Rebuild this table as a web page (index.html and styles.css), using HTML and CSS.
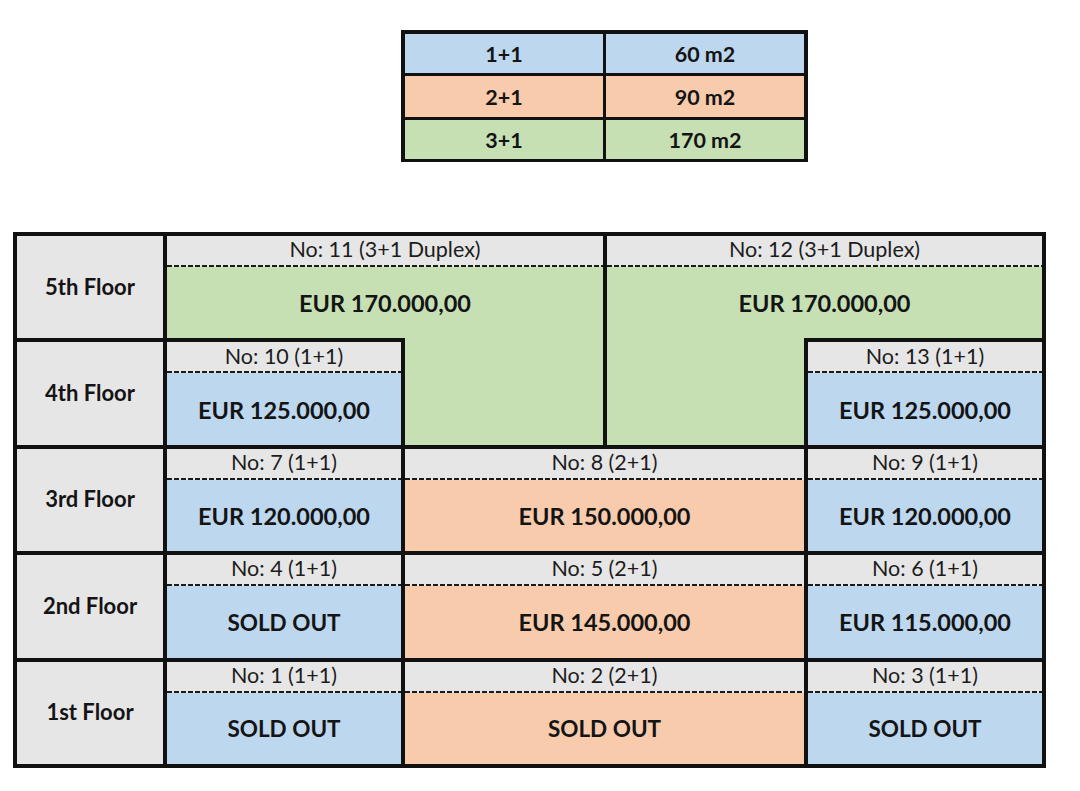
FILE: index.html
```html
<!DOCTYPE html>
<html lang="en">
<head>
<meta charset="utf-8">
<title>Floor plan prices</title>
<link rel="stylesheet" href="styles.css">
</head>
<body>
<div class="legend">
  <div class="lg blue">1+1</div><div class="lg blue">60 m2</div>
  <div class="lg orange">2+1</div><div class="lg orange">90 m2</div>
  <div class="lg green">3+1</div><div class="lg green">170 m2</div>
</div>

<div class="plan">
  <div class="floor">5th Floor</div>
  <div class="unit span2 green"><div class="no">No: 11 (3+1 Duplex)</div><div class="dash"></div><div class="price">EUR 170.000,00</div></div>
  <div class="unit span2 green"><div class="no">No: 12 (3+1 Duplex)</div><div class="dash"></div><div class="price">EUR 170.000,00</div></div>

  <div class="floor">4th Floor</div>
  <div class="unit blue"><div class="no">No: 10 (1+1)</div><div class="dash"></div><div class="price">EUR 125.000,00</div></div>
  <div class="fill green"></div>
  <div class="fill green"></div>
  <div class="unit blue"><div class="no">No: 13 (1+1)</div><div class="dash"></div><div class="price">EUR 125.000,00</div></div>

  <div class="floor">3rd Floor</div>
  <div class="unit blue"><div class="no">No: 7 (1+1)</div><div class="dash"></div><div class="price">EUR 120.000,00</div></div>
  <div class="unit span2 orange"><div class="no">No: 8 (2+1)</div><div class="dash"></div><div class="price">EUR 150.000,00</div></div>
  <div class="unit blue"><div class="no">No: 9 (1+1)</div><div class="dash"></div><div class="price">EUR 120.000,00</div></div>

  <div class="floor">2nd Floor</div>
  <div class="unit blue"><div class="no">No: 4 (1+1)</div><div class="dash"></div><div class="price sold">SOLD OUT</div></div>
  <div class="unit span2 orange"><div class="no">No: 5 (2+1)</div><div class="dash"></div><div class="price">EUR 145.000,00</div></div>
  <div class="unit blue"><div class="no">No: 6 (1+1)</div><div class="dash"></div><div class="price">EUR 115.000,00</div></div>

  <div class="floor">1st Floor</div>
  <div class="unit blue"><div class="no">No: 1 (1+1)</div><div class="dash"></div><div class="price sold">SOLD OUT</div></div>
  <div class="unit span2 orange"><div class="no">No: 2 (2+1)</div><div class="dash"></div><div class="price sold">SOLD OUT</div></div>
  <div class="unit blue"><div class="no">No: 3 (1+1)</div><div class="dash"></div><div class="price sold">SOLD OUT</div></div>
</div>
</body>
</html>
```

FILE: styles.css
```css
html, body {
  margin: 0;
  padding: 0;
  background: #ffffff;
}

body {
  font-family: Lato, "Open Sans", sans-serif;
  color: #141414;
  padding-top: 30px;
}

.blue { background: #bdd7ee; }
.orange { background: #f8cbad; }
.green { background: #c6e0b4; }

.legend {
  margin-left: 401px;
  width: 407px;
  height: 132px;
  box-sizing: border-box;
  display: grid;
  grid-template-columns: 1fr 1fr;
  grid-template-rows: 39px 41px 39px;
  gap: 3px;
  padding: 4px 4px 3px 4px;
  background: #111;
}

.lg {
  display: flex;
  align-items: center;
  justify-content: center;
  font-weight: 700;
  font-size: 21.5px;
}

.plan {
  margin-top: 70px;
  margin-left: 13px;
  width: 1033px;
  height: 536px;
  box-sizing: border-box;
  display: grid;
  grid-template-columns: 146px 234px 198px 197px 234px;
  grid-template-rows: repeat(5, 1fr);
  gap: 4px;
  padding: 4px;
  background: #111;
}

.floor {
  background: #e7e6e6;
  display: flex;
  align-items: center;
  justify-content: center;
  font-weight: 700;
  font-size: 22px;
  padding-bottom: 2px;
}

.unit {
  display: flex;
  flex-direction: column;
  min-width: 0;
}

.span2 { grid-column: span 2; }

.fill { margin-top: -4px; }

.no {
  height: 29px;
  flex: none;
  box-sizing: border-box;
  padding-bottom: 1px;
  background: #e7e6e6;
  display: flex;
  align-items: center;
  justify-content: center;
  font-size: 21.5px;
  line-height: 1;
  color: #1c1c1c;
}

.dash {
  height: 2px;
  flex: none;
  background: repeating-linear-gradient(90deg, #1a1a1a 0 5px, transparent 5px 7px);
  background-color: #e7e6e6;
}

.price {
  flex: 1;
  display: flex;
  align-items: center;
  justify-content: center;
  font-weight: 700;
  font-size: 23.5px;
  padding-top: 1px;
}

.price.sold {
  font-size: 22.5px;
}
```
